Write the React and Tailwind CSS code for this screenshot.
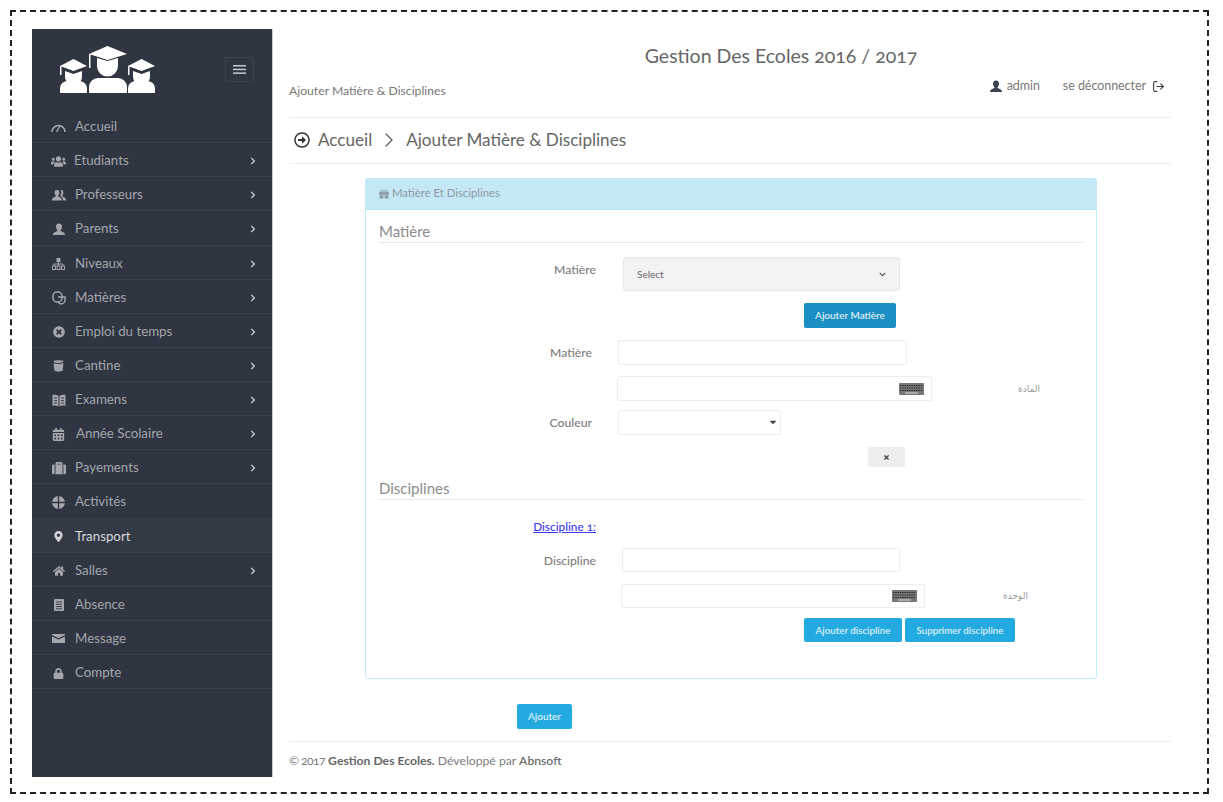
import React from 'react'
import {
  FaUsers, FaPlusCircle, FaCalendarAlt, FaSuitcase, FaMapMarkerAlt, FaHome, FaLock,
  FaChevronRight, FaChevronDown, FaGift, FaTimes, FaCaretDown, FaRegArrowAltCircleRight,
} from 'react-icons/fa'
import { LuLogOut, LuChevronRight } from 'react-icons/lu'

// icones dessinees a la main, celles des packs sont trop differentes
const BUST = 'M6 0.5 C8.2 0.5 9 2.2 9 3.8 C9 5.4 8.3 6.6 7.6 7.2 V8 C9 8.8 12 9.3 12 11.5 V12 H0 V11.5 C0 9.3 3 8.8 4.4 8 V7.2 C3.7 6.6 3 5.4 3 3.8 C3 2.2 3.8 0.5 6 0.5 Z'

function UserIcon({ className }) {
  return (
    <svg width="12" height="12" viewBox="0 0 12 12" fill="currentColor" className={className}>
      <path d={BUST} />
    </svg>
  )
}

const GaugeIcon = () => (
  <svg width="15" height="10" viewBox="0 0 15 10" fill="none" stroke="currentColor">
    <path d="M1 10 A6.5 6.5 0 0 1 14 10" strokeWidth="1.6" />
    <path d="M5.5 10 L9.5 3" strokeWidth="1.4" />
  </svg>
)
const TeachersIcon = () => (
  <svg width="14" height="12" viewBox="0 0 14 12" fill="currentColor">
    <path d="M5 1 C6.8 1 7.4 2.4 7.4 3.8 C7.4 5 6.8 6 6.3 6.5 V7.4 C7.4 8 9.6 8.6 9.6 10.5 V11.5 H0 V10.5 C0 8.6 2.6 8 3.7 7.4 V6.5 C3.2 6 2.6 5 2.6 3.8 C2.6 2.4 3.2 1 5 1 Z" />
    <path d="M9.2 1 C11 1 11.4 2.4 11.4 3.8 C11.4 5 10.9 6 10.4 6.5 V7.4 C11.4 8 14 8.6 14 10.5 V11.5 H10.8 V10.5 C10.8 8.6 9.2 7.8 8.4 7.2 V6.2 C8.9 5.6 9.2 4.8 9.2 3.8 C9.2 2.8 9 1.8 8.4 1.2 Z" />
  </svg>
)
const TreeIcon = () => (
  <svg width="13" height="12" viewBox="0 0 13 12" fill="none" stroke="currentColor" strokeWidth="1">
    <rect x="5" y="0.5" width="3" height="3" fill="currentColor" />
    <path d="M6.5 3.5 V8 M2 8 V6 H11 V8" />
    <rect x="0.5" y="8" width="3" height="3.5" />
    <rect x="5" y="8" width="3" height="3.5" />
    <rect x="9.5" y="8" width="3" height="3.5" />
  </svg>
)
const SubjectsIcon = () => (
  <svg width="14" height="14" viewBox="0 0 14 14" fill="none" stroke="currentColor" strokeWidth="1.5">
    <rect x="1" y="1" width="9" height="10" rx="4" />
    <path d="M6 6 H13 V9 A4 4 0 0 1 9 13 A3 3 0 0 1 6.5 11" />
  </svg>
)
const BucketIcon = () => (
  <svg width="11" height="12" viewBox="0 0 11 12" fill="currentColor">
    <ellipse cx="5.5" cy="1.6" rx="5" ry="1.4" />
    <path d="M0.5 3 C3 4.2 8 4.2 10.5 3 L9.6 10.5 C8 12 3 12 1.4 10.5 Z" />
  </svg>
)
const BookIcon = () => (
  <svg width="14" height="13" viewBox="0 0 14 13" fill="currentColor">
    <path d="M0.5 1 C3 0.5 5 0.8 6.5 2 V12.5 C5 11.5 3 11.2 0.5 11.8 Z" />
    <path d="M13.5 1 C11 0.5 9 0.8 7.5 2 V12.5 C9 11.5 11 11.2 13.5 11.8 Z" />
    <path d="M2 4 H5 M2 6.5 H5 M2 9 H5 M9 4 H12 M9 6.5 H12 M9 9 H12" stroke="#2f3541" strokeWidth="0.9" />
  </svg>
)
const GlobeIcon = () => (
  <svg width="13" height="13" viewBox="0 0 13 13">
    <circle cx="6.5" cy="6.5" r="6.5" fill="currentColor" />
    <path d="M0 6.5 H13 M6.5 0 V13" stroke="#2f3541" strokeWidth="1.3" />
  </svg>
)
const DocIcon = () => (
  <svg width="10" height="12" viewBox="0 0 10 12">
    <rect width="10" height="12" rx="1" fill="currentColor" />
    <path d="M2 3 H8 M2 5.3 H8 M2 7.6 H8 M2 9.8 H8" stroke="#2f3541" strokeWidth="0.9" />
  </svg>
)
const MailIcon = () => (
  <svg width="13" height="9" viewBox="0 0 13 9" fill="currentColor">
    <path d="M0 0 H13 V1 L6.5 4.2 L0 1 Z" />
    <path d="M0 2.4 L6.5 5.6 L13 2.4 V9 H0 Z" />
  </svg>
)
const MenuIcon = () => (
  <svg width="13" height="9" viewBox="0 0 13 9" fill="currentColor">
    <rect width="13" height="1.5" y="0" />
    <rect width="13" height="1.5" y="3.7" />
    <rect width="13" height="1.5" y="7.4" />
  </svg>
)

const menu = [
  { label: 'Accueil', icon: <GaugeIcon /> },
  { label: 'Etudiants', icon: <FaUsers className="text-[15px]" />, arrow: true, gap: 'ml-[8px]' },
  { label: 'Professeurs', icon: <TeachersIcon />, arrow: true },
  { label: 'Parents', icon: <UserIcon />, arrow: true },
  { label: 'Niveaux', icon: <TreeIcon />, arrow: true },
  { label: 'Matières', icon: <SubjectsIcon />, arrow: true },
  { label: 'Emploi du temps', icon: <FaPlusCircle className="text-[12px] rotate-45" />, arrow: true },
  { label: 'Cantine', icon: <BucketIcon />, arrow: true },
  { label: 'Examens', icon: <BookIcon />, arrow: true },
  { label: 'Année Scolaire', icon: <FaCalendarAlt className="text-[13px]" />, arrow: true, gap: 'ml-[10px]' },
  { label: 'Payements', icon: <FaSuitcase className="text-[14px]" />, arrow: true },
  { label: 'Activités', icon: <GlobeIcon /> },
  { label: 'Transport', icon: <FaMapMarkerAlt className="text-[11px]" />, active: true },
  { label: 'Salles', icon: <FaHome className="text-[12px]" />, arrow: true },
  { label: 'Absence', icon: <DocIcon /> },
  { label: 'Message', icon: <MailIcon /> },
  { label: 'Compte', icon: <FaLock className="text-[11px]" /> },
]

function Logo() {
  return (
    <svg width="96" height="48" viewBox="0 0 96 48" fill="white">
      {/* personnages lateraux */}
      <path d="M0 20 L13.5 13 L27 20 L13.5 25 Z" />
      <path d="M5 25 L13.5 28 L22 25 V31 A8.5 8 0 0 1 5 31 Z" />
      <path d="M0 47 V42 A8 7 0 0 1 8 35 H19 A8 7 0 0 1 27 42 V47 Z" />
      <rect x="0" y="20" width="1.5" height="9" />
      <path d="M68 20 L81.5 13 L95 20 L81.5 25 Z" />
      <path d="M73 25 L81.5 28 L90 25 V31 A8.5 8 0 0 1 73 31 Z" />
      <path d="M68 47 V42 A8 7 0 0 1 76 35 H87 A8 7 0 0 1 95 42 V47 Z" />
      <rect x="68" y="20" width="1.5" height="9" />
      {/* personnage central */}
      <path d="M29 8 L47.5 0 L67 8 L47.5 14 Z" />
      <path d="M37 12 L47.5 15 L58 12 V20 A10.5 10.5 0 0 1 37 20 Z" />
      <path d="M29 47 V41 A9 9 0 0 1 38 32 H58 A9 9 0 0 1 67 41 V47 Z" />
      <rect x="29" y="8" width="1.5" height="14" />
    </svg>
  )
}

function KeyboardIcon() {
  return (
    <svg width="25" height="12" viewBox="0 0 25 12" className="absolute right-[7px] top-1/2 -translate-y-1/2">
      <rect width="25" height="12" rx="1" fill="#777" />
      <path d="M1 2.5H24M1 5H24M1 7.5H24" stroke="#2a2a2a" strokeWidth="1" strokeDasharray="1.5 0.8" />
      <path d="M6 10H19" stroke="#ddd" strokeWidth="1" />
    </svg>
  )
}

function SectionTitle({ children, className }) {
  return (
    <div className={`h-[22px] border-b border-[#e6e6e6] text-[15px] leading-[20px] text-[#8c8c8c] ${className}`}>
      {children}
    </div>
  )
}

function FormRow({ label, labelWidth, gap, className, labelClass, children }) {
  return (
    <div className={`flex items-center ${className}`}>
      <div className={`${labelWidth} ${labelClass || 'pt-[2px]'} text-right text-[12.2px] font-medium text-[#7d7d7d]`}>{label}</div>
      <div className={gap}>{children}</div>
    </div>
  )
}

export default function App() {
  return (
    <div className="w-[1223px] h-[802px] pt-[10px] pl-[10px] bg-white overflow-hidden font-['Lato','DejaVu_Sans',sans-serif]">
      <div className="w-[1199px] h-[784px] border-2 border-dashed border-[#222] pt-[17px] pl-[20px] flex">
        {/* sidebar */}
        <aside className="w-[241px] h-[748px] bg-[#2f3541] border-r border-[#c9ccd1] shrink-0">
          <div className="h-[80px] relative">
            <div className="pl-[28px] pt-[17px]"><Logo /></div>
            <button className="absolute left-[193px] top-[28px] w-[29px] h-[25px] border border-[#3c424e] rounded-[2px] flex items-center justify-center text-[#c8cacd]">
              <MenuIcon />
            </button>
          </div>
          {menu.map((m) => (
            <div
              key={m.label}
              className={`h-[34.125px] border-b border-[#383e4a] flex items-center pr-[15px] pt-[3px] text-[13.3px] ${m.active ? 'bg-[#333945] text-[#d5d7da]' : 'text-[#a3a6ac]'}`}
            >
              <span className="w-[15px] ml-[19px] flex justify-center">{m.icon}</span>
              <span className={m.gap || 'ml-[9px]'}>{m.label}</span>
              {m.arrow && <FaChevronRight className="ml-auto text-[8px] text-[#d5d7da]" />}
            </div>
          ))}
        </aside>

        {/* contenu */}
        <main className="w-[882px] ml-[16px] text-[#777]">
          <div className="mt-[13px] h-[28px] pl-[102px] text-center text-[19.5px] leading-[28px] text-[#666] oldstyle-nums">
            Gestion Des Ecoles 2016 / 2017
          </div>
          <div className="h-[48px] border-b border-[#eeeeee] flex justify-between items-start leading-[18px]">
            <div className="pt-[12px] text-[12.2px]">Ajouter Matière &amp; Disciplines</div>
            <div className="pt-[7px] pr-[6px] flex items-center text-[12.4px]">
              <UserIcon className="text-[#3b4250]" />
              <span className="ml-[5px]">admin</span>
              <span className="ml-[23px]">se déconnecter</span>
              <LuLogOut className="ml-[6px] text-[13px] text-[#444]" />
            </div>
          </div>
          <div className="h-[46px] border-b border-[#eeeeee] flex items-center text-[17.1px] text-[#666] pl-[5px] pb-[2px]">
            <FaRegArrowAltCircleRight className="text-[16px] text-[#333]" />
            <span className="ml-[8px]">Accueil</span>
            <LuChevronRight className="mx-[5px] text-[24px] text-[#666] stroke-[1.4]" />
            <span>Ajouter Matière &amp; Disciplines</span>
          </div>

          {/* panel */}
          <section className="mt-[14px] ml-[76px] w-[732px] h-[501px] border border-[#bfeefb] rounded-[3px]">
            <div className="h-[32px] -mt-px -mx-px bg-[#c4e8f5] border-b border-[#b8e6f5] rounded-t-[3px] pl-[14px] flex items-center text-[11.3px] text-[#8a9aa3]">
              <FaGift className="text-[10px] mr-[3px]" />
              Matière Et Disciplines
            </div>
            <div className="px-[13px] pt-[11px]">
              <SectionTitle>Matière</SectionTitle>

              <FormRow label="Matière" labelWidth="w-[217px]" labelClass="pt-[4px]" gap="ml-[27px]" className="mt-[14px] items-start">
                <div className="w-[277px] h-[34px] bg-[#f3f3f3] border border-[#e6e6e6] rounded-[3px] flex items-center justify-between pl-[13px] pr-[13px] text-[10px] text-[#666]">
                  Select
                  <FaChevronDown className="text-[7px] text-[#444]" />
                </div>
              </FormRow>
              <div className="mt-[12px] ml-[425px] w-[92px] h-[25px] bg-[#1b8fc3] rounded-[2px] flex items-center justify-center text-[10px] font-medium text-[#e6f3f9]">
                Ajouter Matière
              </div>
              <FormRow label="Matière" labelWidth="w-[213px]" gap="ml-[26px]" className="mt-[12px]">
                <input readOnly className="block w-[289px] h-[25px] border border-[#eeeeee] rounded-[2px] bg-white" />
              </FormRow>
              <div className="mt-[11px] ml-[238px] flex items-center">
                <div className="relative w-[315px] h-[25px] border border-[#eeeeee] rounded-[2px]">
                  <KeyboardIcon />
                </div>
                <span className="ml-[86px] text-[9px] text-[#999]" dir="rtl">المادة</span>
              </div>
              <FormRow label="Couleur" labelWidth="w-[213px]" gap="ml-[26px]" className="mt-[9px]">
                <div className="w-[163px] h-[25px] border border-[#eeeeee] rounded-[2px] flex items-center justify-end pr-[2px] pb-[2px] text-[#444] text-[10px]">
                  <FaCaretDown />
                </div>
              </FormRow>
              <div className="mt-[12px] ml-[489px] w-[37px] h-[20px] bg-[#eeeeee] rounded-[2px] flex items-center justify-center text-[7px] text-[#444]">
                <FaTimes />
              </div>

              <SectionTitle className="mt-[11px]">Disciplines</SectionTitle>

              <div className="mt-[17px] w-[217px] h-[20px] leading-[20px] text-right text-[11.8px] font-medium text-[#3b3bf5] underline oldstyle-nums">
                Discipline 1:
              </div>
              <FormRow label="Discipline" labelWidth="w-[217px]" gap="ml-[26px]" className="mt-[11px]">
                <input readOnly className="block w-[278px] h-[24px] border border-[#eeeeee] rounded-[2px] bg-white" />
              </FormRow>
              <div className="mt-[12px] ml-[242px] flex items-center">
                <div className="relative w-[304px] h-[24px] border border-[#eeeeee] rounded-[2px]">
                  <KeyboardIcon />
                </div>
                <span className="ml-[78px] text-[9px] text-[#999]" dir="rtl">الوحدة</span>
              </div>
              <div className="mt-[10px] ml-[425px] flex gap-[3px] text-[9.8px] font-medium text-[#e4f4fb]">
                <div className="w-[98px] h-[24px] bg-[#22aae1] rounded-[2px] flex items-center justify-center">Ajouter discipline</div>
                <div className="w-[110px] h-[24px] bg-[#22aae1] rounded-[2px] flex items-center justify-center">Supprimer discipline</div>
              </div>
            </div>
          </section>

          <div className="mt-[25px] ml-[228px] w-[55px] h-[25px] bg-[#22aae1] rounded-[2px] flex items-center justify-center text-[10px] font-medium text-[#e4f4fb]">
            Ajouter
          </div>
          <div className="mt-[12px] border-t border-[#eeeeee] pt-[10px] text-[12.2px] leading-[18px] text-[#7d7d7d] oldstyle-nums">
            <span className="tracking-[-0.6px]">© 2017</span> <b className="text-[#666]">Gestion Des Ecoles.</b> Développé par <span className="font-medium text-[#666]">Abnsoft</span>
          </div>
        </main>
      </div>
    </div>
  )
}
